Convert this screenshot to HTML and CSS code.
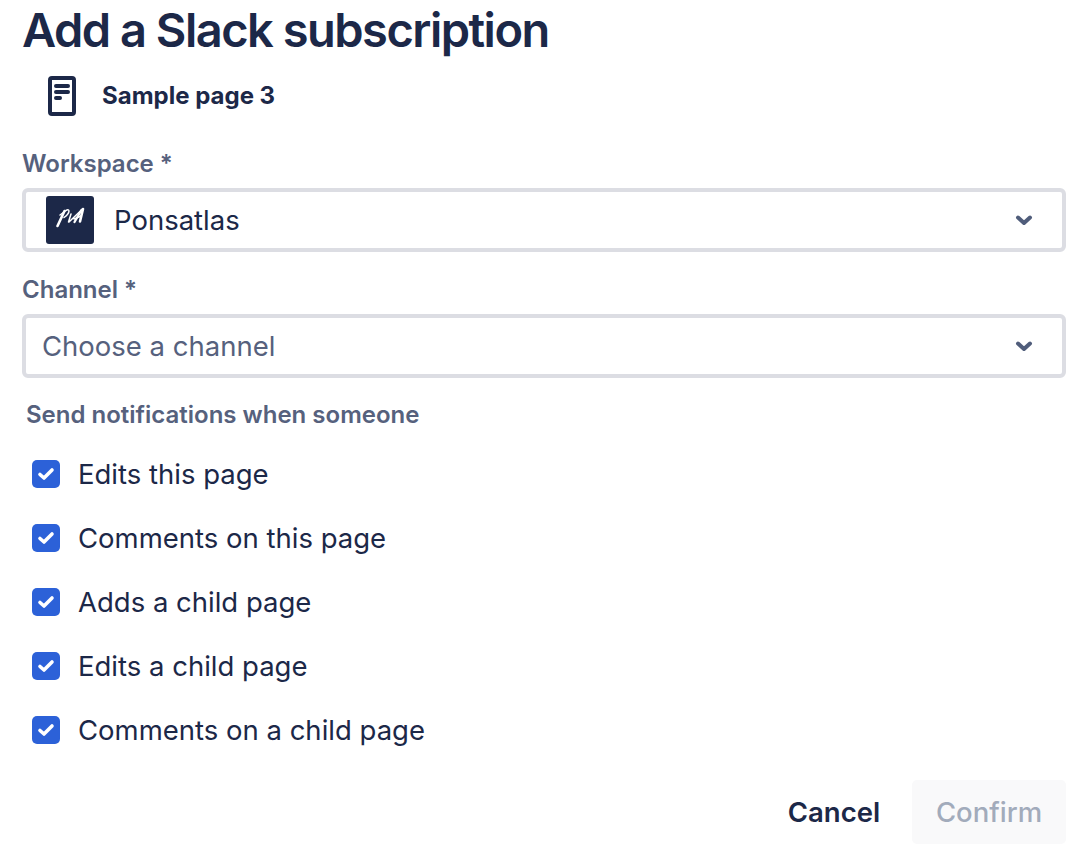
FILE: index.html
```
<!DOCTYPE html>
<html lang="en">
<head>
<meta charset="utf-8">
<title>Add a Slack subscription</title>
<link rel="stylesheet" href="styles.css">
</head>
<body>
<form class="dialog">
  <h1 class="title"><span>Add a Slack subscription</span></h1>
  <div class="page">
    <svg class="page-icon" width="28" height="40" viewBox="0 0 28 40" fill="none" stroke="currentColor" stroke-width="4" stroke-linecap="round">
      <rect x="2" y="2" width="24" height="36" rx="2"/>
      <path d="M8 10h12M8 16h12M8 22h4"/>
    </svg>
    <span class="page-name">Sample page 3</span>
  </div>

  <div class="label"><span class="label-workspace">Workspace</span><span class="required">*</span></div>
  <div class="select">
    <svg class="logo" width="48" height="48" viewBox="0 0 48 48" fill="none" stroke="#fff" stroke-linecap="round" stroke-linejoin="round">
      <rect width="48" height="48" rx="3" fill="#1c2848" stroke="none"/>
      <path stroke-width="2.6" d="M18.5 15L11.5 30M37 13L34 25.500"/>
      <path stroke-width="1.500" d="M14 19L20 14.500M20 14.500C24 12 24.500 17 18 21.500M25 18L22.500 26M23 26L36.500 13M28 23L35 20"/>
      <path stroke-width="2.300" d="M35.500 14L28.500 26"/>
    </svg>
    <span class="value workspace">Ponsatlas</span>
    <svg class="chevron" width="20" height="14" viewBox="0 0 20 14" fill="none" stroke="currentColor" stroke-width="4" stroke-linecap="round" stroke-linejoin="round"><path d="M4 4.500L10 10L16 4.500"/></svg>
  </div>

  <div class="label"><span class="label-channel">Channel</span><span class="required">*</span></div>
  <div class="select">
    <span class="value placeholder">Choose a channel</span>
    <svg class="chevron" width="20" height="14" viewBox="0 0 20 14" fill="none" stroke="currentColor" stroke-width="4" stroke-linecap="round" stroke-linejoin="round"><path d="M4 4.500L10 10L16 4.500"/></svg>
  </div>

  <div class="events-title"><span>Send notifications when someone</span></div>
  <ul class="events">
    <li class="event"><svg class="check" viewBox="0 0 28 28"><rect width="28" height="28" rx="5"/><path d="M8 14.500L12 18L20 10"/></svg><span class="event-1">Edits this page</span></li>
    <li class="event"><svg class="check" viewBox="0 0 28 28"><rect width="28" height="28" rx="5"/><path d="M8 14.500L12 18L20 10"/></svg><span class="event-2">Comments on this page</span></li>
    <li class="event"><svg class="check" viewBox="0 0 28 28"><rect width="28" height="28" rx="5"/><path d="M8 14.500L12 18L20 10"/></svg><span class="event-3">Adds a child page</span></li>
    <li class="event"><svg class="check" viewBox="0 0 28 28"><rect width="28" height="28" rx="5"/><path d="M8 14.500L12 18L20 10"/></svg><span class="event-4">Edits a child page</span></li>
    <li class="event"><svg class="check" viewBox="0 0 28 28"><rect width="28" height="28" rx="5"/><path d="M8 14.500L12 18L20 10"/></svg><span class="event-5">Comments on a child page</span></li>
  </ul>

  <div class="actions">
    <button type="button" class="button cancel"><span>Cancel</span></button>
    <button type="button" class="button confirm" disabled><span>Confirm</span></button>
  </div>
</form>
</body>
</html>
```
FILE: styles.css
```
* { box-sizing: border-box; }
body {
  margin: 0;
  background: #fff;
  color: #1c2848;
  font-family: Inter, "Liberation Sans", sans-serif;
  font-size: 27.5px;
  white-space: nowrap;
}
.dialog {
  width: 1077px;
  height: 851px;
  padding: 0 11px 0 22px;
  overflow: hidden;
}
.title {
  margin: 0;
  height: 60px;
  line-height: 60px;
  font-size: 47px;
  font-weight: 600;
  letter-spacing: -1.5px;
}
.page {
  display: flex;
  align-items: center;
  gap: 26px;
  height: 72px;
  padding-left: 26px;
}
.page-name { font-size: 24px; font-weight: 700; line-height: 30px; }
.label {
  display: flex;
  align-items: center;
  gap: 6px;
  height: 56px;
  padding-top: 7px;
  color: #56617d;
  font-size: 24px;
  font-weight: 600;
}
.select {
  display: flex;
  align-items: center;
  height: 64px;
  padding: 0 28px 0 20px;
  border: 4px solid #dcdde3;
  border-radius: 6px;
}
.select + .label { height: 62px; padding-top: 13px; }
.value { flex: 1; }
.workspace { margin-left: 20px; }
.placeholder { margin-left: -4px; color: #56617d; }
.chevron { color: #505d7b; }
.events-title {
  height: 64px;
  padding: 0 4px;
  line-height: 74px;
  color: #56617d;
  font-size: 24px;
  font-weight: 600;
}
.events { margin: 0; padding: 0 0 0 10px; list-style: none; }
.event { display: flex; align-items: center; gap: 18px; height: 64px; }
.check { width: 28px; height: 28px; fill: #2c61d8; }
.check path {
  fill: none;
  stroke: #fff;
  stroke-width: 3.6;
  stroke-linecap: round;
  stroke-linejoin: round;
}
.actions { display: flex; justify-content: flex-end; gap: 9px; margin-top: 18px; }
.button {
  height: 64px;
  padding: 0;
  border: 0;
  border-radius: 5px;
  background: none;
  color: inherit;
  font: inherit;
  font-weight: 500;
}
.cancel { width: 138px; font-weight: 600; }
.confirm { width: 154px; background: #f9f9fa; color: #a2abbb; }
```
